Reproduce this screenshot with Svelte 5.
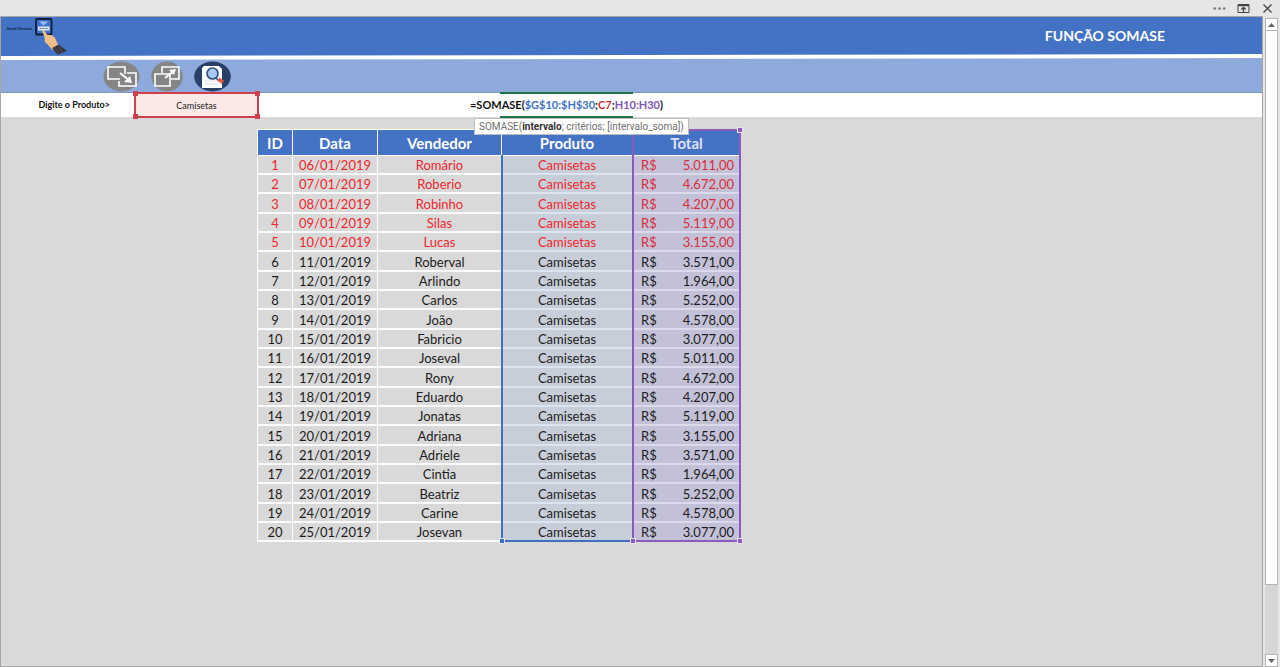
<script lang="ts">
	const sellers = [
		'Romário', 'Roberio', 'Robinho', 'Silas', 'Lucas', 'Roberval', 'Arlindo', 'Carlos', 'João', 'Fabricio',
		'Joseval', 'Rony', 'Eduardo', 'Jonatas', 'Adriana', 'Adriele', 'Cintia', 'Beatriz', 'Carine', 'Josevan'
	];

	const totals = [
		'5.011,00', '4.672,00', '4.207,00', '5.119,00', '3.155,00',
		'3.571,00', '1.964,00', '5.252,00', '4.578,00', '3.077,00'
	];

	const rows = sellers.map((seller, i) => ({
		id: i + 1,
		date: `${String(i + 6).padStart(2, '0')}/01/2019`,
		seller,
		product: 'Camisetas',
		total: totals[i % totals.length],
		marked: i < 5
	}));

	let product = $state('Camisetas');
</script>

<div class="window">
	<div class="titlebar">
		<button aria-label="Mais opções">
			<svg width="13" height="13" viewBox="0 0 13 13" fill="#777">
				<circle cx="1.8" cy="6.5" r="1.3" />
				<circle cx="6.5" cy="6.5" r="1.3" />
				<circle cx="11.2" cy="6.5" r="1.3" />
			</svg>
		</button>
		<button aria-label="Opções de exibição da faixa de opções">
			<svg width="13" height="13" viewBox="0 0 13 13" fill="none" stroke="#444">
				<path d="M1 2.5h11v8H1z" />
				<path d="M1 3.5h11" stroke-width="1.5" />
				<path d="M6.5 10V6M4.3 7.5l2.2-2 2.2 2" stroke-width="1.3" />
			</svg>
		</button>
		<button aria-label="Fechar">
			<svg width="13" height="13" viewBox="0 0 13 13" fill="none" stroke="#444" stroke-width="1.3">
				<path d="M2.5 2.5l8 8M10.5 2.5l-8 8" />
			</svg>
		</button>
	</div>

	<div class="body">
		<main class="sheet">
			<header class="banner">
				<div class="logo">
					<span>Excel Fórmula</span>
					<svg width="33" height="38" viewBox="0 0 33 38">
						<rect x="1" y="2" width="15.5" height="15.5" rx="1" fill="#3f72cb" stroke="#101d38" stroke-width="1.8" />
						<path d="M4 4.5h9l-4.5 4z" fill="#9bbcf0" />
						<rect x="3" y="9.5" width="11.5" height="4" fill="#dce6f5" />
						<path d="M4.5 11.5h8" stroke="#52688f" stroke-dasharray="2 1" />
						<path d="M7 13.3c1.2-1 2.3.3 3.1 1.6l2.3 2.8c2.2-.3 6.3.7 7.6 3.2l3.8 8-6 4.5-5.3-6.1c-2.4-1.3-3.2-3.2-2.8-6.1z" fill="#efbf89" />
						<path d="M17 31l6.5-3.5 8.5 6.5-9.5 3.5z" fill="#37343c" />
						<path d="M20 30l4 6M23 29l4 6" stroke="#66606a" stroke-width=".7" />
					</svg>
				</div>
				<h1>FUNÇÃO SOMASE</h1>
			</header>

			<!-- slightly slanted white rule under the banner -->
			<svg class="rule" viewBox="0 0 100 6" preserveAspectRatio="none" aria-hidden="true">
				<path d="M0 0h100v4L0 6z" fill="#fff" />
				<path d="M0 0h100L0 2z" fill="#4472c4" />
			</svg>

			<nav class="tools">
				<button aria-label="Recolher janela">
					<svg width="37" height="31" viewBox="0 0 37 31">
						<ellipse cx="18.5" cy="15.5" rx="18" ry="15" fill="#858585" />
						<g fill="none" stroke="#fff" stroke-width="1.6">
							<path d="M17 18H5V6h17v7" />
							<path d="M24 12h9v13H16v-5" />
							<path d="M17 12l10 8" stroke-width="2" />
						</g>
						<path d="M29 22l-8-1 6-6z" fill="#fff" />
					</svg>
				</button>
				<button aria-label="Expandir janela">
					<svg width="32" height="31" viewBox="0 0 32 31">
						<ellipse cx="16" cy="15.5" rx="15.7" ry="15" fill="#858585" />
						<g fill="none" stroke="#fff" stroke-width="1.6">
							<path d="M4 13h15v12H4z" />
							<path d="M11 12V6h17v12h-8" />
							<path d="M14 17l9-7" stroke-width="2" />
						</g>
						<path d="M25 8l-7 1 5 5z" fill="#fff" />
					</svg>
				</button>
				<button aria-label="Pesquisar">
					<svg width="37" height="31" viewBox="0 0 37 31">
						<ellipse cx="18.5" cy="15.5" rx="18.3" ry="15" fill="#293f66" />
						<path d="M10 5h15l3 3v19H8V7z" fill="#fff" />
						<path d="M11 20h13M11 23h13" stroke="#dde1e8" />
						<path d="M22 17l3 3" stroke="#31517f" stroke-width="1.6" />
						<circle cx="18.5" cy="12.5" r="5.5" fill="#a8c8ee" stroke="#31517f" stroke-width="1.7" />
						<path d="M24.5 18l4.5 3.5" stroke="#e85843" stroke-width="3.6" />
					</svg>
				</button>
			</nav>

			<div class="entry">
				<label for="product">Digite o Produto&gt;</label>
				<div class="field">
					<input id="product" type="text" bind:value={product} />
					<i class="handle tl"></i>
					<i class="handle tr"></i>
					<i class="handle bl"></i>
					<i class="handle br"></i>
				</div>
				<div class="formula">
					<code>=SOMASE(<span class="blue">$G$10:$H$30</span>;<span class="red">C7</span>;<span class="purple">H10:H30</span>)</code>
					<div class="hint" role="tooltip">SOMASE(<b>intervalo</b>; critérios; [intervalo_soma])</div>
				</div>
			</div>

			<div class="data">
				<table>
					<colgroup>
						<col class="c-id" />
						<col class="c-date" />
						<col class="c-seller" />
						<col class="c-product" />
						<col class="c-total" />
					</colgroup>
					<thead>
						<tr>
							<th>ID</th>
							<th>Data</th>
							<th>Vendedor</th>
							<th>Produto</th>
							<th class="total-head">Total</th>
						</tr>
					</thead>
					<tbody>
						{#each rows as row (row.id)}
							<tr class:marked={row.marked}>
								<td>{row.id}</td>
								<td>{row.date}</td>
								<td>{row.seller}</td>
								<td class="product">{row.product}</td>
								<td class="total"><div><span>R$</span><span>{row.total}</span></div></td>
							</tr>
						{/each}
					</tbody>
				</table>
				<div class="range range-product"><i class="handle bl"></i></div>
				<div class="range range-total">
					<i class="handle tr"></i>
					<i class="handle bl"></i>
					<i class="handle br"></i>
				</div>
			</div>
		</main>

		<div class="scrollbar">
			<button aria-label="Rolar para cima">
				<svg width="7" height="4" viewBox="0 0 7 4"><path d="M0 4l3.5-4L7 4z" fill="#666" /></svg>
			</button>
			<div class="track"><div class="thumb"></div></div>
			<button aria-label="Rolar para baixo">
				<svg width="7" height="4" viewBox="0 0 7 4"><path d="M0 0l3.5 4L7 0z" fill="#666" /></svg>
			</button>
		</div>
	</div>
</div>

<style>
	:global(body) {
		margin: 0;
	}

	.window {
		display: flex;
		flex-direction: column;
		min-height: 100vh;
		background: #e6e6e6;
		font-family: Lato, "Liberation Sans", sans-serif;
		font-size: 13px;
		color: #1c1c1c;
	}

	.window :global(*) {
		box-sizing: border-box;
	}

	button {
		display: flex;
		align-items: center;
		justify-content: center;
		padding: 0;
		border: 0;
		background: none;
	}

	.titlebar {
		display: flex;
		justify-content: flex-end;
		gap: 11px;
		height: 16px;
		padding-right: 6px;
	}

	.body {
		display: flex;
		flex: 1;
	}

	.sheet {
		flex: 1;
		min-width: 0;
		border: 1px solid #a6a6a6;
		background: #d9d9d9;
	}

	.banner {
		display: flex;
		justify-content: space-between;
		height: 37px;
		padding: 0 97px 0 6px;
		background: #4472c4;
	}

	.logo {
		display: flex;
	}

	.logo svg {
		position: relative;
		z-index: 1;
	}

	.logo span {
		width: 28px;
		padding-top: 9px;
		font-size: 4px;
		font-weight: 900;
		line-height: 5px;
		color: #14264a;
		white-space: nowrap;
	}

	h1 {
		margin: 0;
		font-size: 14px;
		font-weight: 700;
		line-height: 37px;
		color: #fff;
	}

	.rule {
		display: block;
		width: 100%;
		height: 6px;
		background: #8ea9db;
	}

	.tools {
		display: flex;
		align-items: center;
		gap: 11px;
		height: 33px;
		padding-left: 102px;
		background: #8ea9db;
		border-bottom: 1px solid #8296bd;
	}

	.entry {
		display: flex;
		height: 24px;
		background: #fff;
		font-size: 9px;
	}

	label {
		width: 133px;
		padding-right: 24px;
		font-weight: 700;
		line-height: 24px;
		text-align: right;
		color: #111;
	}

	.field {
		position: relative;
		width: 125px;
		margin: -1px 0;
		color: #d0404c;
	}

	input {
		display: block;
		width: 100%;
		height: 100%;
		padding: 0;
		border: 2px solid #d0404c;
		background: #fae9e7;
		font: inherit;
		color: #222;
		text-align: center;
	}

	.formula {
		position: relative;
		display: flex;
		justify-content: center;
		width: 133px;
		margin: -1px 0 -1px 241px;
		border: 2px solid #21734a;
		border-width: 2px 0;
	}

	code {
		flex: none;
		font-family: inherit;
		font-size: 11px;
		font-weight: 700;
		line-height: 22px;
		color: #111;
		white-space: nowrap;
	}

	.blue {
		color: #3d73c5;
	}

	.red {
		color: #c8323a;
	}

	.purple {
		color: #7e55b5;
	}

	.hint {
		position: absolute;
		z-index: 2;
		top: 24px;
		left: -26px;
		height: 17px;
		padding: 0 4px;
		border: 1px solid #bdbdbd;
		background: #fff;
		font-family: Roboto, sans-serif;
		font-size: 10px;
		line-height: 15px;
		color: #707070;
		white-space: nowrap;
	}

	.hint b {
		color: #333;
	}

	.data {
		position: relative;
		width: 484px;
		margin: 12px 0 24px 256px;
	}

	table {
		width: 100%;
		table-layout: fixed;
		border-collapse: separate;
		border-spacing: 0;
		border: solid #fff;
		border-width: 1px 0 0 1px;
	}

	.c-id {
		width: 35px;
	}

	.c-date {
		width: 85px;
	}

	.c-seller {
		width: 124px;
	}

	.c-product {
		width: 131px;
	}

	th {
		height: 26px;
		padding: 0;
		border: solid #fff;
		border-width: 0 1px 1px 0;
		background: #4472c4;
		font-size: 15px;
		font-weight: 700;
		line-height: 24px;
		color: #fff;
	}

	.total-head {
		color: #dfe0f4;
	}

	td {
		height: 19px;
		padding: 2px 0 0;
		border: solid #fcfcfc;
		border-width: 0 1px 2px 0;
		line-height: 15px;
		text-align: center;
	}

	tbody tr:nth-child(3n) td {
		height: 20px;
	}

	.product {
		border-color: #dce5ef;
		background: #c7ced9;
	}

	.total {
		border-color: #dcd9ea;
		background: #c3c1d7;
	}

	.marked {
		color: #f0262b;
	}

	.marked .total {
		color: #d92c3a;
	}

	.total div {
		display: flex;
		justify-content: space-between;
		padding: 0 6px 0 8px;
	}

	.range {
		position: absolute;
		pointer-events: none;
	}

	.range-product {
		inset: 26px 108px 0 244px;
		border: solid #3f6fc1;
		border-width: 0 0 2px 2px;
		color: #3f6fc1;
	}

	.range-total {
		inset: 0 0 0 375px;
		border: 2px solid #8a5bbd;
		color: #8a5bbd;
	}

	.handle {
		position: absolute;
		width: 5px;
		height: 5px;
		border: 1px solid #e8e4ef;
		background: currentColor;
	}

	.field .handle {
		border: 0;
	}

	.tl,
	.tr {
		top: -1px;
	}

	.bl,
	.br {
		bottom: -1px;
	}

	.tl,
	.bl {
		left: -1px;
	}

	.tr,
	.br {
		right: -1px;
	}

	.range .handle {
		width: 6px;
		height: 6px;
	}

	.range .bl,
	.range .br {
		bottom: -4px;
	}

	.range .tr {
		top: -4px;
	}

	.range .bl {
		left: -4px;
	}

	.range .tr,
	.range .br {
		right: -4px;
	}

	.scrollbar {
		display: flex;
		flex-direction: column;
		width: 13px;
		margin: 2px 2px 0 2px;
	}

	.scrollbar button {
		height: 13px;
		border: 1px solid #b4b4b4;
		background: #fff;
	}

	.track {
		flex: 1;
		background: #d6d6d6;
	}

	.thumb {
		height: 89%;
		border: 1px solid #b4b4b4;
		border-top: 0;
		background: #fff;
	}
</style>
